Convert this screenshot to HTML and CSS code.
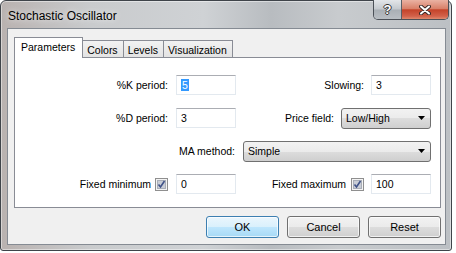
FILE: index.html
```html
<!DOCTYPE html>
<html lang="en">
<head>
    <meta charset="UTF-8">
    <title>Stochastic Oscillator</title>
    <link rel="stylesheet" href="styles.css">
</head>
<body>

<div class="window">
    <div class="titlebar">
        <span class="title">Stochastic Oscillator</span>
        <div class="caption-buttons">
            <span class="cap-btn help">?</span>
            <span class="cap-btn close">
                <svg width="12" height="10" viewBox="0 0 12 10">
                    <path d="M2 1.5 L10 8.5 M10 1.5 L2 8.5" stroke="#3b2a28" stroke-width="4" stroke-linecap="round"/>
                    <path d="M2 1.5 L10 8.5 M10 1.5 L2 8.5" stroke="#fff" stroke-width="2" stroke-linecap="round"/>
                </svg>
            </span>
        </div>
    </div>

    <div class="client">
        <!-- Tabs -->
        <div class="tabs">
            <span class="tab active">Parameters</span>
            <span class="tab">Colors</span>
            <span class="tab">Levels</span>
            <span class="tab">Visualization</span>
        </div>

        <div class="panel">
            <div class="row">
                <div class="left"><span class="label">%K period:</span></div>
                <div class="field"><span class="selected">5</span></div>
                <div class="right">
                    <span class="label">Slowing:</span>
                    <div class="field">3</div>
                </div>
            </div>

            <div class="row">
                <div class="left"><span class="label">%D period:</span></div>
                <div class="field">3</div>
                <div class="right">
                    <span class="label">Price field:</span>
                    <div class="combo combo-short">
                        <span>Low/High</span>
                        <svg width="7" height="4" viewBox="0 0 7 4"><polygon points="0,0 7,0 3.5,4" fill="#000"/></svg>
                    </div>
                </div>
            </div>

            <div class="row">
                <div class="left"></div>
                <span class="label ma-label">MA method:</span>
                <div class="combo combo-wide">
                    <span>Simple</span>
                    <svg width="7" height="4" viewBox="0 0 7 4"><polygon points="0,0 7,0 3.5,4" fill="#000"/></svg>
                </div>
            </div>

            <div class="row">
                <div class="left">
                    <span class="label">Fixed minimum</span>
                    <span class="check">
                        <svg width="13" height="13" viewBox="0 0 13 13">
                            <rect x="0.5" y="0.5" width="12" height="12" fill="#f4f4f4" stroke="#8f8f8f"/>
                            <rect x="2.5" y="2.5" width="8" height="8" fill="#c9cdd6" stroke="#a9aeb8"/>
                            <path d="M3.5 6.5 L5.5 9 L9.5 3" fill="none" stroke="#3f5288" stroke-width="1.6"/>
                        </svg>
                    </span>
                </div>
                <div class="field">0</div>
                <div class="right">
                    <span class="label">Fixed maximum</span>
                    <span class="check check-right">
                        <svg width="13" height="13" viewBox="0 0 13 13">
                            <rect x="0.5" y="0.5" width="12" height="12" fill="#f4f4f4" stroke="#8f8f8f"/>
                            <rect x="2.5" y="2.5" width="8" height="8" fill="#c9cdd6" stroke="#a9aeb8"/>
                            <path d="M3.5 6.5 L5.5 9 L9.5 3" fill="none" stroke="#3f5288" stroke-width="1.6"/>
                        </svg>
                    </span>
                    <div class="field">100</div>
                </div>
            </div>
        </div>

        <div class="buttons">
            <span class="btn default">OK</span>
            <span class="btn">Cancel</span>
            <span class="btn">Reset</span>
        </div>
    </div>
</div>

</body>
</html>
```

FILE: styles.css
```css
* {
    margin: 0;
    padding: 0;
    box-sizing: border-box;
}

body {
    background-color: #fff;
    font-family: "Liberation Sans", Arial, sans-serif;
    font-size: 10.5px;
    color: #000;
}

.window {
    width: 452px;
    height: 251px;
    display: flex;
    flex-direction: column;
    padding: 0 5px 5px 6px;
    border: 1px solid #3f444a;
    border-radius: 6px 6px 3px 3px;
    background: linear-gradient(90deg, #b9b2b0 0%, #c9cbcd 20%, #cfd2d5 45%, #b8bcc0 60%, #c8cbce 75%, #bcc0c4 100%);
    box-shadow: inset 0 0 0 1px rgba(255, 255, 255, 0.45);
}

/* Title bar */
.titlebar {
    height: 27px;
    display: flex;
    align-items: flex-start;
}

.title {
    padding: 8px 0 0 1px;
    font-size: 12px;
    color: #000;
    text-shadow: 0 0 6px rgba(255, 255, 255, 0.9);
}

.caption-buttons {
    display: flex;
    margin-left: auto;
    margin-right: -3px;
    margin-top: -1px;
    border: 1px solid #4b5057;
    border-top: none;
    border-radius: 0 0 5px 5px;
    overflow: hidden;
}

.cap-btn {
    height: 19px;
    display: flex;
    align-items: center;
    justify-content: center;
}

.help {
    width: 28px;
    border-right: 1px solid #5a5f66;
    background: linear-gradient(#e3e6e9 0%, #c4c9ce 48%, #a9afb5 52%, #b9bec3 100%);
    color: #fff;
    font-weight: bold;
    font-size: 13px;
    text-shadow: 1px 0 0 #333, -1px 0 0 #333, 0 1px 0 #333, 0 -1px 0 #333;
}

.close {
    width: 46px;
    background: linear-gradient(#eab2a3 0%, #d9816a 45%, #c4432a 52%, #d2614a 85%, #e08a6e 100%);
}

/* Client area */
.client {
    flex: 1;
    display: flex;
    flex-direction: column;
    padding: 8px 4px 0 6px;
    background-color: #f0f0f0;
    border: 1px solid #858b93;
}

.tabs {
    height: 20px;
    display: flex;
    align-items: flex-end;
    position: relative;
    z-index: 1;
}

.tab {
    height: 17px;
    padding: 1px 5px 0 4px;
    margin-left: -1px;
    display: flex;
    align-items: center;
    border: 1px solid #898c95;
    border-bottom: none;
    background: linear-gradient(#f2f2f2, #e3e3e3);
}

.tab.active {
    height: 21px;
    margin-left: 0;
    margin-bottom: -1px;
    padding: 0 7px 2px 6px;
    background-color: #fff;
    background-image: none;
}

.panel {
    height: 151px;
    display: flex;
    flex-direction: column;
    gap: 13px;
    padding: 17px 9px 0 0;
    background-color: #fff;
    border: 1px solid #898c95;
}

.row {
    height: 20px;
    display: flex;
    align-items: center;
}

.left {
    width: 153px;
    display: flex;
    justify-content: flex-end;
    align-items: center;
}

.right {
    flex: 1;
    display: flex;
    justify-content: flex-end;
    align-items: center;
}

.right .label {
    margin-right: 7px;
}

.field {
    width: 60px;
    height: 20px;
    margin-left: 8px;
    padding: 3px 0 0 4px;
    border: 1px solid #e3e9ef;
    border-top-color: #abadb3;
    background-color: #fff;
}

.right .field {
    margin-left: 0;
}

.selected {
    background-color: #3399ff;
    color: #fff;
    padding: 0 1px;
}

.combo {
    height: 21px;
    display: flex;
    align-items: center;
    justify-content: space-between;
    padding: 0 5px 0 4px;
    border: 1px solid #707070;
    border-radius: 3px;
    background: linear-gradient(#f2f2f2 0%, #ebebeb 50%, #dddddd 50%, #cfcfcf 100%);
}

.combo-short {
    width: 90px;
}

.combo-wide {
    flex: 1;
    margin-left: 8px;
}

.ma-label {
    margin-left: 11px;
}

.check {
    display: flex;
    margin-left: 4px;
}

.right .check-right {
    margin: 0 7px 0 -2px;
}

/* Buttons */
.buttons {
    display: flex;
    justify-content: flex-end;
    gap: 8px;
    margin-top: 8px;
}

.btn {
    width: 73px;
    height: 22px;
    display: flex;
    align-items: center;
    justify-content: center;
    font-size: 11px;
    border: 1px solid #707070;
    border-radius: 3px;
    background: linear-gradient(#f2f2f2 0%, #ebebeb 50%, #dddddd 50%, #cfcfcf 100%);
    box-shadow: inset 0 0 0 1px rgba(255, 255, 255, 0.7);
}

.btn.default {
    border-color: #3c7fb1;
    background: linear-gradient(#eaf6fd 0%, #d9f0fc 50%, #bee6fd 50%, #a7d9f5 100%);
}
```
